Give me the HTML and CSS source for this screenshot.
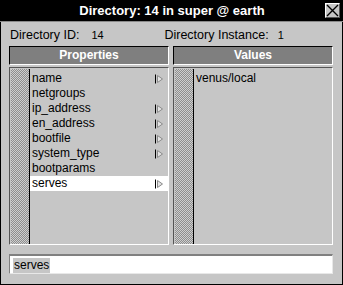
FILE: index.html
```html
<!DOCTYPE html>
<html>
  <head>
    <meta charset="UTF-8">
    <title>Directory</title>
    <link rel="stylesheet" href="styles.css">
  </head>
  <body>
    <div class="window">
      <div class="titlebar">
        <span class="title">Directory: 14 in super @ earth</span>
        <span class="close">
          <svg width="13" height="13" viewBox="0 0 13 13"><path d="M1 1L12 12M12 1L1 12" stroke="#000" stroke-width="1.4"/></svg>
        </span>
      </div>

      <div class="info">
        <span class="label">Directory ID:</span><span class="val id">14</span>
        <span class="label inst">Directory Instance:</span><span class="val">1</span>
      </div>

      <div class="columns">
        <div class="col">
          <div class="header">Properties</div>
          <div class="list">
            <div class="stipple"></div>
            <ul class="items">
              <li>name<span class="arrow"></span></li>
              <li>netgroups</li>
              <li>ip_address<span class="arrow"></span></li>
              <li>en_address<span class="arrow"></span></li>
              <li>bootfile<span class="arrow"></span></li>
              <li>system_type<span class="arrow"></span></li>
              <li>bootparams</li>
              <li class="selected">serves<span class="arrow"></span></li>
            </ul>
          </div>
        </div>
        <div class="col">
          <div class="header">Values</div>
          <div class="list">
            <div class="stipple"></div>
            <ul class="items">
              <li>venus/local</li>
            </ul>
          </div>
        </div>
      </div>

      <div class="entry"><span class="sel">serves</span></div>
    </div>

    <script>
      // draw the little submenu arrows
      document.querySelectorAll('.arrow').forEach(a => {
        a.innerHTML = '<svg width="9" height="10" viewBox="0 0 9 10">' +
          '<path d="M0.5 0.5V9.5" stroke="#000" stroke-width="1"/>' +
          '<path d="M2.5 1.5L7.5 5L2.5 8.5Z" fill="#e4e4e4" stroke="#8a8a8a" stroke-width="1"/></svg>';
      });
    </script>
  </body>
</html>
```

FILE: styles.css
```css
body {
  margin: 0;
  font-family: "Liberation Sans", Arial, sans-serif;
  font-size: 12px;
  background-color: #c6c6c6;
}
.window {
  width: 343px;
  height: 285px;
  box-sizing: border-box;
  border: 1px solid #000;
  border-top: none;
  background-color: #c6c6c6;
  display: flex;
  flex-direction: column;
}
.titlebar {
  height: 21px;
  margin: 0 -1px;
  background-color: #000;
  border-bottom: 1px solid #8a8a8a;
  position: relative;
  display: flex;
  align-items: center;
  justify-content: center;
}
.title {
  color: #fff;
  font-weight: bold;
  font-size: 13px;
  margin-left: 1px;
}
.close {
  position: absolute;
  right: 3px;
  top: 3px;
  width: 15px;
  height: 15px;
  box-sizing: border-box;
  background-color: #c6c6c6;
  border-top: 1px solid #fff;
  border-left: 1px solid #fff;
  border-bottom: 1px solid #555;
  border-right: 1px solid #555;
  display: flex;
  align-items: center;
  justify-content: center;
}
.close svg {
  display: block;
}

.info {
  height: 24px;
  padding-left: 9px;
  display: flex;
  align-items: center;
  font-size: 12.5px;
  color: #000;
  padding-top: 2px;
  box-sizing: border-box;
}
.info .val {
  font-size: 11px;
}
.info .id {
  margin-left: 12px;
  width: 73px;
}
.info .inst {
  margin-right: 9px;
}

.columns {
  display: flex;
  gap: 4px;
  padding-left: 8px;
}
.col {
  width: 160px;
  display: flex;
  flex-direction: column;
  gap: 2px;
}
.header {
  height: 19px;
  box-sizing: border-box;
  background-color: #7f7f7f;
  border-top: 1px solid #000;
  border-left: 1px solid #000;
  border-bottom: 1px solid #fff;
  border-right: 1px solid #fff;
  color: #fff;
  font-weight: bold;
  text-align: center;
  line-height: 17px;
}
.list {
  height: 178px;
  box-sizing: border-box;
  border-top: 1px solid #555;
  border-left: 1px solid #555;
  border-bottom: 1px solid #fff;
  border-right: 1px solid #fff;
  padding: 1px 0 0 1px;
  display: flex;
}
.stipple {
  width: 18px;
  border-right: 1px solid #000;
  background: repeating-conic-gradient(#8e8e8e 0 25%, #cfcfcf 0 50%) 0 0 / 2px 2px;
}
.items {
  flex: 1;
  list-style: none;
  margin: 0;
  padding: 2px 0 0 0;
}
.items li {
  height: 15px;
  line-height: 15px;
  padding-left: 2px;
  padding-right: 4px;
  display: flex;
  justify-content: space-between;
  align-items: center;
}
.items li.selected {
  background-color: #fff;
}
.arrow svg {
  display: block;
}

.entry {
  margin: 9px 9px 0 8px;
  height: 20px;
  box-sizing: border-box;
  background-color: #fff;
  border-top: 2px solid #808080;
  border-left: 1px solid #808080;
  border-bottom: 1px solid #e8e8e8;
  border-right: 1px solid #e8e8e8;
  padding: 1px 0 0 3px;
  display: flex;
  align-items: center;
}
.sel {
  background-color: #c6c6c6;
  padding: 0 1px;
  line-height: 15px;
}
```
